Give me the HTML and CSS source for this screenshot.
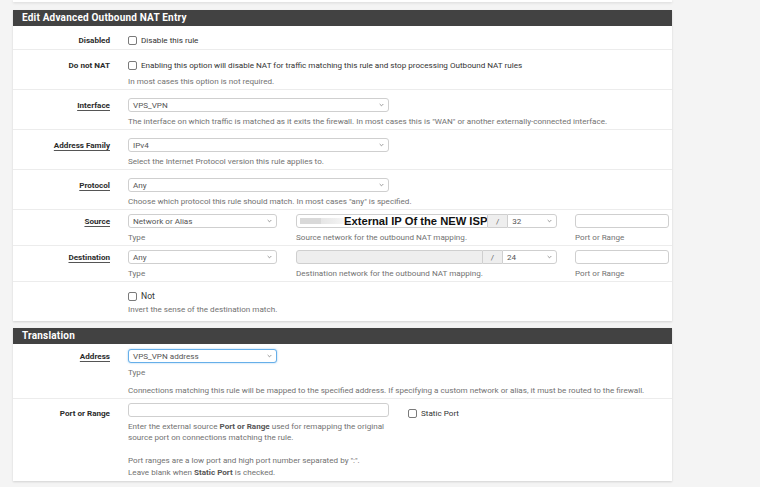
FILE: index.html
```html
<!DOCTYPE html>
<html>
<head>
<meta charset="utf-8">
<title>Edit Advanced Outbound NAT Entry</title>
<link rel="stylesheet" href="styles.css">
</head>
<body>
<div class="page">
  <div class="prev"></div>

  <div class="panel p1">
    <div class="heading">Edit Advanced Outbound NAT Entry</div>

    <div class="row first">
      <div class="lbl">Disabled</div>
      <div class="ctl">
        <label class="chk"><span class="box"></span>Disable this rule</label>
      </div>
    </div>

    <div class="row">
      <div class="lbl">Do not NAT</div>
      <div class="ctl">
        <label class="chk"><span class="box"></span>Enabling this option will disable NAT for traffic matching this rule and stop processing Outbound NAT rules</label>
        <div class="help">In most cases this option is not required.</div>
      </div>
    </div>

    <div class="row">
      <div class="lbl req">Interface</div>
      <div class="ctl">
        <div class="sel w261"><span>VPS_VPN</span><svg class="chev" viewBox="0 0 6 4"><path d="M0.8 0.8 L3 3 L5.2 0.8"/></svg></div>
        <div class="help">The interface on which traffic is matched as it exits the firewall. In most cases this is "WAN" or another externally-connected interface.</div>
      </div>
    </div>

    <div class="row">
      <div class="lbl req">Address Family</div>
      <div class="ctl">
        <div class="sel w261"><span>IPv4</span><svg class="chev" viewBox="0 0 6 4"><path d="M0.8 0.8 L3 3 L5.2 0.8"/></svg></div>
        <div class="help">Select the Internet Protocol version this rule applies to.</div>
      </div>
    </div>

    <div class="row">
      <div class="lbl req">Protocol</div>
      <div class="ctl">
        <div class="sel w261"><span>Any</span><svg class="chev" viewBox="0 0 6 4"><path d="M0.8 0.8 L3 3 L5.2 0.8"/></svg></div>
        <div class="help">Choose which protocol this rule should match. In most cases "any" is specified.</div>
      </div>
    </div>

    <div class="row tight">
      <div class="lbl req">Source</div>
      <div class="ctl cols">
        <div class="col-type">
          <div class="sel"><span>Network or Alias</span><svg class="chev" viewBox="0 0 6 4"><path d="M0.8 0.8 L3 3 L5.2 0.8"/></svg></div>
          <div class="help">Type</div>
        </div>
        <div class="col-net">
          <div class="group">
            <div class="inp addr src"><span class="blur"><i class="b1"></i><i class="b2"></i></span><span class="note">External IP Of the NEW ISP</span></div>
            <div class="addon">/</div>
            <div class="sel gsel s50"><span>32</span><svg class="chev" viewBox="0 0 6 4"><path d="M0.8 0.8 L3 3 L5.2 0.8"/></svg></div>
          </div>
          <div class="help">Source network for the outbound NAT mapping.</div>
        </div>
        <div class="col-port">
          <div class="inp"></div>
          <div class="help">Port or Range</div>
        </div>
      </div>
    </div>

    <div class="row tight">
      <div class="lbl req">Destination</div>
      <div class="ctl cols">
        <div class="col-type">
          <div class="sel"><span>Any</span><svg class="chev" viewBox="0 0 6 4"><path d="M0.8 0.8 L3 3 L5.2 0.8"/></svg></div>
          <div class="help">Type</div>
        </div>
        <div class="col-net">
          <div class="group">
            <div class="inp addr dst disabled"></div>
            <div class="addon">/</div>
            <div class="sel gsel s55"><span>24</span><svg class="chev" viewBox="0 0 6 4"><path d="M0.8 0.8 L3 3 L5.2 0.8"/></svg></div>
          </div>
          <div class="help">Destination network for the outbound NAT mapping.</div>
        </div>
        <div class="col-port">
          <div class="inp"></div>
          <div class="help">Port or Range</div>
        </div>
      </div>
    </div>

    <div class="row last not-row">
      <div class="lbl"></div>
      <div class="ctl">
        <label class="chk strong"><span class="box"></span>Not</label>
        <div class="help">Invert the sense of the destination match.</div>
      </div>
    </div>
  </div>

  <div class="panel p2">
    <div class="heading">Translation</div>

    <div class="row addr-row">
      <div class="lbl req">Address</div>
      <div class="ctl">
        <div class="sel focus w149"><span>VPS_VPN address</span><svg class="chev" viewBox="0 0 6 4"><path d="M0.8 0.8 L3 3 L5.2 0.8"/></svg></div>
        <div class="help type">Type</div>
        <div class="help gap">Connections matching this rule will be mapped to the specified address. If specifying a custom network or alias, it must be routed to the firewall.</div>
      </div>
    </div>

    <div class="row last port-row">
      <div class="lbl low">Port or Range</div>
      <div class="ctl">
        <div class="inline">
          <div class="inp w261"></div>
          <label class="chk static"><span class="box"></span>Static Port</label>
        </div>
        <div class="help multi">Enter the external source <b>Port or Range</b> used for remapping the original<br>source port on connections matching the rule.<br><br>Port ranges are a low port and high port number separated by ":".<br>Leave blank when <b>Static Port</b> is checked.</div>
      </div>
    </div>
  </div>
</div>
</body>
</html>
```

FILE: styles.css
```css
html, body {
  margin: 0;
  padding: 0;
  background: #f4f4f4;
}

body {
  font-family: Roboto, "Liberation Sans", Arial, sans-serif;
  font-size: 8.1px;
  color: #333;
  width: 760px;
  height: 487px;
  overflow: hidden;
}

.page {
  width: 659px;
  padding-left: 13px;
}

.prev {
  height: 2px;
  background: #fff;
  box-shadow: 0 1px 3px rgba(0, 0, 0, 0.13);
}

.panel {
  background: #fff;
  box-shadow: 0 1px 2px rgba(0, 0, 0, 0.14);
}

.p1 {
  margin-top: 8px;
}

.p2 {
  margin-top: 7px;
}

.heading {
  height: 16px;
  line-height: 16px;
  background: #424242;
  color: #fff;
  font-weight: 700;
  font-size: 10px;
  letter-spacing: 0.2px;
  padding-left: 9px;
}

.row {
  display: flex;
  border-bottom: 1px solid #ececec;
  padding: 8px 0 2px;
}

.row.first {
  padding-top: 7px;
}

.row.tight {
  padding-top: 4px;
}

.row.last {
  border-bottom: none;
  padding-bottom: 2px;
}

.lbl {
  flex: none;
  width: 97px;
  padding-right: 18px;
  text-align: right;
  font-weight: 700;
  line-height: 14px;
  color: #2b2b2b;
  white-space: nowrap;
}

.lbl.low {
  padding-top: 2.5px;
}

.lbl.req {
  text-decoration: underline;
  text-underline-offset: 1.5px;
  text-decoration-color: #555;
}

.ctl {
  flex: 1;
  min-width: 0;
}

.help {
  margin-top: 3.5px;
  line-height: 11.5px;
  color: #727272;
  white-space: nowrap;
}

.help b {
  color: #555;
  font-weight: 700;
}

.chk {
  display: flex;
  align-items: center;
  height: 14px;
  color: #333;
  white-space: nowrap;
}

.chk.strong {
  font-size: 8.6px;
}

.not-row {
  padding-top: 8px;
}

.row.not-row {
  padding-bottom: 5.5px;
}

.not-row .chk {
  height: 12px;
}

.not-row .help {
  margin-top: 2px;
}

.box {
  flex: none;
  width: 7px;
  height: 7px;
  border: 1px solid #7a7a7a;
  border-radius: 2px;
  background: #fff;
  margin-right: 4px;
}

.sel {
  box-sizing: border-box;
  height: 14px;
  border: 1px solid #cfcfcf;
  border-radius: 3px;
  background: #fff;
  display: flex;
  align-items: center;
  justify-content: space-between;
  padding: 0 4px 0 4px;
  color: #555;
}

.sel span {
  white-space: nowrap;
}

.w261 {
  width: 261px;
}

.w149 {
  width: 149px;
}

.chev {
  width: 5px;
  height: 4px;
  fill: none;
  stroke: #777;
  stroke-width: 0.9;
}

.sel.focus {
  border-color: #66afe9;
  box-shadow: 0 0 2px rgba(102, 175, 233, 0.7);
}

.cols {
  display: flex;
}

.col-type {
  width: 149px;
  margin-right: 19px;
}

.col-net {
  width: 261px;
  margin-right: 18px;
}

.col-port {
  width: 94px;
}

.inp {
  box-sizing: border-box;
  height: 14px;
  border: 1px solid #cfcfcf;
  border-radius: 3px;
  background: #fff;
}

.group {
  display: flex;
  height: 14px;
}

.inp.addr {
  border-radius: 3px 0 0 3px;
  display: flex;
  align-items: center;
  overflow: hidden;
}

.inp.src {
  width: 193px;
}

.inp.dst {
  width: 187px;
}

.inp.disabled {
  background: #eee;
}

.blur {
  display: flex;
  margin-left: 3px;
  height: 6px;
}

.blur i {
  display: block;
  height: 6px;
}

.b1 {
  width: 21px;
  background: #d9d9d9;
}

.b2 {
  width: 23px;
  background: linear-gradient(to right, #e6e6e6, #eeeeee 60%, #f6f6f6);
}

.note {
  font-family: "Liberation Sans", Arial, sans-serif;
  font-weight: 700;
  font-size: 11.2px;
  color: #111;
  white-space: nowrap;
  line-height: 12px;
}

.addon {
  box-sizing: border-box;
  flex: none;
  width: 19px;
  height: 14px;
  background: #eee;
  border-top: 1px solid #cfcfcf;
  border-bottom: 1px solid #cfcfcf;
  color: #666;
  text-align: center;
  line-height: 12px;
}

.gsel {
  border-radius: 0 3px 3px 0;
}

.s50 {
  width: 50px;
}

.s55 {
  width: 55px;
}

.addr-row {
  padding-top: 5px;
}

.help.type {
  margin-top: 3.5px;
}

.help.gap {
  margin-top: 6.5px;
}

.port-row {
  padding-top: 4px;
}

.row.port-row {
  padding-bottom: 3px;
}

.inline {
  display: flex;
  align-items: flex-start;
  height: 14px;
}

.chk.static {
  margin-left: 19px;
  margin-top: 3px;
}

.help.multi {
  margin-top: 3.5px;
}
```
